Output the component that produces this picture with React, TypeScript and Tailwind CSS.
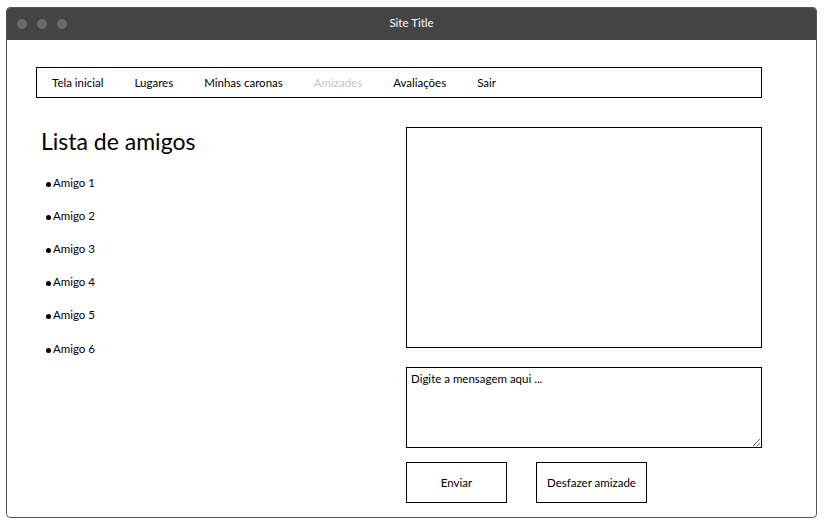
export default function App() {
  const navItems = ["Tela inicial", "Lugares", "Minhas caronas", "Amizades", "Avaliações", "Sair"];
  const friends = ["Amigo 1", "Amigo 2", "Amigo 3", "Amigo 4", "Amigo 5", "Amigo 6"];

  return (
    <div className="h-[531px] w-[828px] bg-white pl-[6px] pt-[7px] font-['Lato',sans-serif] text-black">
      <div className="flex h-[511px] w-[811px] flex-col overflow-hidden rounded-[4px] border border-[#555555]">
        {/* title bar */}
        <div className="relative flex h-[32px] shrink-0 items-center bg-[#444444]">
          <div className="flex gap-[10px] pl-[10px]">
            <span className="h-[10px] w-[10px] rounded-full bg-[#6b6b6b]" />
            <span className="h-[10px] w-[10px] rounded-full bg-[#6b6b6b]" />
            <span className="h-[10px] w-[10px] rounded-full bg-[#6b6b6b]" />
          </div>
          <span className="absolute left-0 right-0 -mt-[2px] text-center text-[11.5px] text-white">Site Title</span>
        </div>

        <div className="flex flex-col pl-[29px] pt-[27px]">
          <nav className="flex h-[31px] w-[726px] items-center gap-[31px] border border-black px-[15px] text-[11.5px]">
            {navItems.map((item) => (
              <span key={item} className={item === "Amizades" ? "text-[#c4c4c4]" : ""}>
                {item}
              </span>
            ))}
          </nav>

          <div className="mt-[29px] flex">
            <div className="w-[370px] pl-[5px]">
              <h1 className="text-[23px] leading-[28px]">Lista de amigos</h1>
              <ul className="mt-[20px] flex flex-col gap-[17px] text-[11.5px]">
                {friends.map((f) => (
                  <li key={f} className="flex h-[16px] items-center last:mt-[1px]">
                    <span className="mr-[2px] ml-[5px] mt-[2px] h-[5px] w-[5px] rounded-full bg-black" />
                    {f}
                  </li>
                ))}
              </ul>
            </div>

            <div className="flex w-[356px] flex-col">
              <div className="h-[221px] border border-black" />
              <textarea
                className="mt-[19px] h-[81px] w-full border border-black px-[4px] py-[2px] text-[11.5px] placeholder:text-black"
                placeholder="Digite a mensagem aqui ..."
              />
              <div className="mt-[14px] flex gap-[29px] text-[11.5px]">
                <button type="button" className="h-[41px] w-[101px] border border-black">
                  Enviar
                </button>
                <button type="button" className="h-[41px] w-[111px] border border-black">
                  Desfazer amizade
                </button>
              </div>
            </div>
          </div>
        </div>
      </div>
    </div>
  );
}
